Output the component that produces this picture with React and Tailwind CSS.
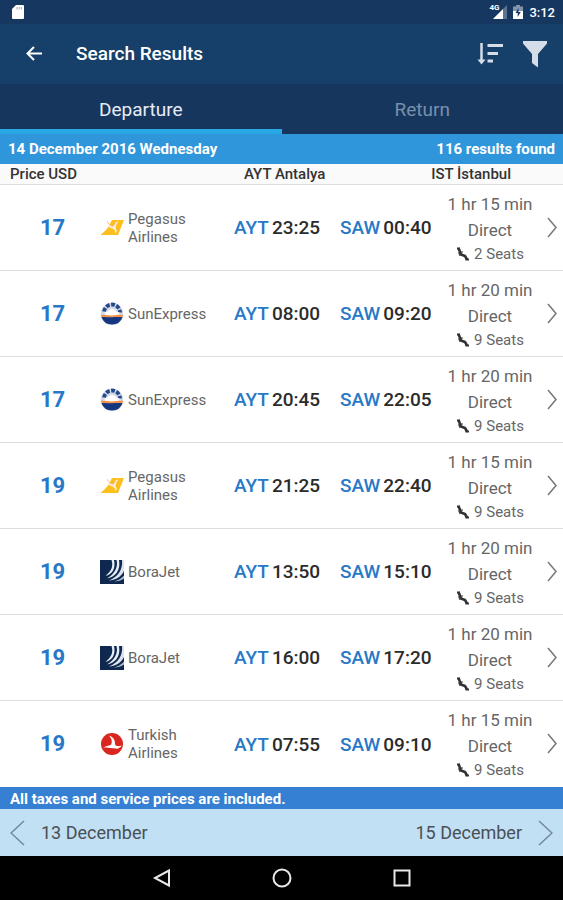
import React, { useState } from "react";

const flights = [
  { price: 17, airline: "Pegasus Airlines", depart: "23:25", arrive: "00:40", duration: "1 hr 15 min", seats: 2 },
  { price: 17, airline: "SunExpress", depart: "08:00", arrive: "09:20", duration: "1 hr 20 min", seats: 9 },
  { price: 17, airline: "SunExpress", depart: "20:45", arrive: "22:05", duration: "1 hr 20 min", seats: 9 },
  { price: 19, airline: "Pegasus Airlines", depart: "21:25", arrive: "22:40", duration: "1 hr 15 min", seats: 9 },
  { price: 19, airline: "BoraJet", depart: "13:50", arrive: "15:10", duration: "1 hr 20 min", seats: 9 },
  { price: 19, airline: "BoraJet", depart: "16:00", arrive: "17:20", duration: "1 hr 20 min", seats: 9 },
  { price: 19, airline: "Turkish Airlines", depart: "07:55", arrive: "09:10", duration: "1 hr 15 min", seats: 9 },
];

const AirlineLogo = ({ airline }) => {
  switch (airline) {
    case "Pegasus Airlines":
      return (
        <svg viewBox="0 0 24 24" className="w-6 h-6 shrink-0">
          <path d="M12 4H24L18 19H0.5C3 16.500 6 14.500 8 11.500Z" fill="#fcbf1b" />
          <path d="M7.500 4.500C8.500 8 10 9.500 13 10.200L15.500 6.500 18.500 5 16 9.500 15.500 12.500 17 14.500 15.800 17 14.800 16.500 15.200 14.800 12.500 12.500C10 12 8.500 10.800 7.500 9.200L9 9.300C7.800 8 7 6.500 7.500 4.500Z" fill="#fdeedd" />
          <path d="M7.500 5.500c1 2.800 2.700 4 5.500 4.700L15.500 7" stroke="#eba58a" strokeWidth="0.7" fill="none" />
        </svg>
      );
    case "SunExpress":
      return (
        <svg viewBox="0 0 24 24" className="w-6 h-6 shrink-0">
          <circle cx="12" cy="12" r="11.200" fill="#d3dae6" />
          <path d="M4 10.500A8 8 0 0 1 20 10.500" stroke="#24488c" strokeWidth="3.800" strokeDasharray="3.800 1.500" strokeDashoffset="-1" fill="none" />
          <path d="M4.500 10.500 7.500 9.500 9 7.800 12 7 15 7.800 16.500 9.500 19.500 10.500 19 14H5Z" fill="#fff" />
          <path d="M1 12.800c4-.3 7 .8 11 .6s7-.9 11-.6l-.8 3.700H1.800Z" fill="#f3904a" />
          <path d="M1.500 15.200c4-.6 7 .3 10.500.1s7-.6 10.500-.1A11.200 11.200 0 0 1 1.500 15.200Z" fill="#15377f" />
        </svg>
      );
    case "BoraJet":
      return (
        <svg viewBox="0 0 24 24" className="w-6 h-6 shrink-0">
          <path d="M0 0H24V24H0Z" fill="#0f2850" />
          <path d="M11.500 0C13.500 6 11.500 11 5.500 16 12 14.500 16 8.500 14 0Z" fill="#e8eef5" />
          <path d="M16.500 0C18.500 7.500 14 14.500 7 18.500 15 17.500 21 10 19 0Z" fill="#e8eef5" />
          <path d="M22 0C23 10 18 16.500 9 20.500 15 20.500 21 17 24 11V0Z" fill="#dbe4ee" />
          <path d="M14 21.500C18 20.500 21.500 18.500 24 15.500V18.500C21.500 20.500 18 21.500 14 21.500Z" fill="#aebccd" />
        </svg>
      );
    default:
      return (
        <svg viewBox="0 0 24 24" className="w-6 h-6 shrink-0">
          <circle cx="12" cy="12" r="11" fill="#d9261f" />
          <path d="M9 3.500c4 1.200 6 4 6 8 0 1.500.8 2.300 2 2.500 1.800.3 3.500.1 5-.7-1.500 2.600-3.500 3.500-6.500 3.300-4-.2-8-1.600-12.500-.8 2.500-1.800 5.500-2 8-3 1.500-2.800 1-6-2-9.300Z" fill="#fff" />
        </svg>
      );
  }
};

const SeatIcon = () => (
  <svg viewBox="0 0 14 14" className="w-3.5 h-3.5" fill="none" stroke="#333">
    <path d="M2.500 1 5 7.500 9 9 11 12.500" strokeWidth="2.600" strokeLinejoin="round" />
    <path d="M1 1.500H4M9.500 12.500H13" strokeWidth="2" />
    <path d="M4.500 5H7M2.500 5.500 4 9" strokeWidth="1" />
  </svg>
);

const Chevron = ({ className, points = "1,1 9,10.500 1,20", viewBox = "0 0 10 21" }) => (
  <svg viewBox={viewBox} className={className} fill="none" stroke="currentColor" strokeWidth="1.500">
    <polyline points={points} />
  </svg>
);

const StatusBar = () => (
  <div className="h-6 shrink-0 bg-[#16375f] flex items-center justify-between pl-3 pr-2 text-white">
    <svg viewBox="0 0 12 14" className="w-3 h-3.5">
      <path d="M4 0H11a1 1 0 0 1 1 1V13a1 1 0 0 1-1 1H1a1 1 0 0 1-1-1V4Z" fill="#fff" />
      <path d="M5 2V4.500M7.200 2V4.500M9.400 2V4.500" stroke="#9aabc0" strokeWidth="1" />
    </svg>
    <div className="flex items-center gap-1.5">
      <div className="relative w-4 h-3.5">
        <svg viewBox="0 0 16 14" className="w-4 h-3.5">
          <path d="M16 0V14H2Z" fill="#5c7491" />
          <path d="M12 4V14H2Z" fill="#fff" />
        </svg>
        <span className="absolute -left-0.5 -top-px text-[8px] leading-none font-bold">4G</span>
      </div>
      <svg viewBox="0 0 10 14" className="w-2.5 h-3.5">
        <path d="M3 0H7V1.500H10V7H0V1.500H3Z" fill="#8496ad" />
        <path d="M0 6H10V14H0Z" fill="#fff" />
        <path d="M5.500 3 2.500 8H4.700V12L7.700 7H5.500Z" fill="#16375f" />
      </svg>
      <span className="text-[13px] leading-none font-medium">3:12</span>
    </div>
  </div>
);

const Toolbar = () => (
  <header className="h-[60px] shrink-0 bg-[#164069] flex items-center pl-6 pr-4 text-white">
    <button type="button" aria-label="Back">
      <svg viewBox="0 0 20 20" className="w-5 h-5" fill="none" stroke="currentColor" strokeWidth="2">
        <path d="M18 9.500H4M10 3 3.500 9.500 10 16" />
      </svg>
    </button>
    <h1 className="ml-8 text-[19px] leading-6 font-medium">Search Results</h1>
    <div className="ml-auto flex items-center gap-5 text-[#d5dde8]">
      <button type="button" aria-label="Sort">
        <svg viewBox="0 0 26 24" className="w-[26px] h-6" fill="none" stroke="currentColor">
          <path d="M4.500 1V20" strokeWidth="2.500" />
          <path d="M0.500 17.500H8.500L4.500 22.500Z" fill="currentColor" stroke="none" />
          <path d="M10.500 3.500H26M10.500 11.500H21M10.500 19H16" strokeWidth="3" />
        </svg>
      </button>
      <button type="button" aria-label="Filter">
        <svg viewBox="0 0 24 27" className="w-6 h-[27px]" fill="currentColor">
          <path d="M0 0H24V2.500L15 13V26.500L9 22V13L0 2.500Z" />
        </svg>
      </button>
    </div>
  </header>
);

const Tabs = ({ active, onChange }) => (
  <div role="tablist" className="h-[50px] shrink-0 grid grid-cols-2 bg-[#16365e] text-[19px]">
    {["Departure", "Return"].map((tab) => (
      <button
        key={tab}
        type="button"
        role="tab"
        aria-selected={active === tab}
        onClick={() => onChange(tab)}
        className={
          active === tab
            ? "pt-2 border-b-[5px] border-[#28a9e5] text-[#e6ecf5]"
            : "pt-2 border-b-[5px] border-transparent text-[#7890aa]"
        }
      >
        {tab}
      </button>
    ))}
  </div>
);

const FlightTable = () => (
  <table className="w-full table-fixed bg-white">
    <colgroup>
      <col className="w-[100px]" />
      <col />
      <col className="w-[106px]" />
      <col className="w-[100px]" />
      <col className="w-[100px]" />
      <col className="w-[23px]" />
    </colgroup>
    <thead className="bg-[#fafafa] text-[15px] leading-5 text-[#333]">
      <tr className="h-5 text-left">
        <th colSpan={2} className="p-0 pl-2.5 font-medium">Price USD</th>
        <th className="p-0 pl-2.5 font-medium whitespace-nowrap">AYT Antalya</th>
        <th colSpan={3} className="p-0 pr-13 font-medium text-right">IST İstanbul</th>
      </tr>
    </thead>
    <tbody>
      {flights.map((flight, index) => (
        <tr key={index} className="h-[86px] border-t border-[#dedede]">
          <td className="p-0 pl-10 text-[22px] font-bold text-[#2878c8]">{flight.price}</td>
          <td className="p-0">
            <div className="flex items-center gap-1 pr-5 text-[15px] leading-[18px] text-[#666]">
              <AirlineLogo airline={flight.airline} />
              <span>{flight.airline}</span>
            </div>
          </td>
          <td className="p-0">
            <div className="flex gap-[3px] pt-0.5 text-[19px] font-medium text-[#2b2b2b]">
              <span className="text-[#2878c8]">AYT</span>
              <span>{flight.depart}</span>
            </div>
          </td>
          <td className="p-0">
            <div className="flex gap-[3px] pt-0.5 text-[19px] font-medium text-[#2b2b2b]">
              <span className="text-[#2878c8]">SAW</span>
              <span>{flight.arrive}</span>
            </div>
          </td>
          <td className="p-0 text-center text-[17px] leading-[26px] text-[#666]">
            <div>{flight.duration}</div>
            <div>Direct</div>
            <div className="flex items-center justify-center gap-1 text-[15px] leading-[22px]">
              <SeatIcon />
              {flight.seats} Seats
            </div>
          </td>
          <td className="p-0">
            <button type="button" aria-label="Flight details" className="block ml-[7px] text-[#777]">
              <Chevron className="w-2.5 h-[21px]" />
            </button>
          </td>
        </tr>
      ))}
    </tbody>
  </table>
);

const DayNav = () => (
  <nav className="h-[47px] shrink-0 flex items-center justify-between px-2.5 bg-[#c1e0f4] text-lg text-[#4a4f55]">
    <button type="button" className="flex items-center gap-4">
      <Chevron className="w-[15px] h-[26px] text-[#74879a]" viewBox="0 0 15 26" points="14,1 1,13 14,25" />
      13 December
    </button>
    <button type="button" className="flex items-center gap-4">
      15 December
      <Chevron className="w-[15px] h-[26px] text-[#74879a]" viewBox="0 0 15 26" points="1,1 14,13 1,25" />
    </button>
  </nav>
);

const SystemNav = () => (
  <div className="h-11 shrink-0 flex items-center justify-center gap-[100px] bg-black text-[#e8e8e8]">
    <button type="button" aria-label="System back">
      <svg viewBox="0 0 20 20" className="w-5 h-5" fill="none" stroke="currentColor" strokeWidth="2">
        <path d="M17 2.500V17.500L3 10Z" />
      </svg>
    </button>
    <button type="button" aria-label="Home">
      <svg viewBox="0 0 20 20" className="w-5 h-5" fill="none" stroke="currentColor" strokeWidth="2">
        <circle cx="10" cy="10" r="8.500" />
      </svg>
    </button>
    <button type="button" aria-label="Recent apps">
      <svg viewBox="0 0 20 20" className="w-5 h-5" fill="none" stroke="currentColor" strokeWidth="2">
        <rect x="2.500" y="2.500" width="15" height="15" />
      </svg>
    </button>
  </div>
);

const App = () => {
  const [activeTab, setActiveTab] = useState("Departure");

  return (
    <div className="min-h-screen flex flex-col bg-white font-['Roboto',sans-serif]">
      <StatusBar />
      <Toolbar />
      <Tabs active={activeTab} onChange={setActiveTab} />

      {/* Selected day */}
      <div className="h-[30px] shrink-0 flex items-center justify-between px-2 bg-[#3096db] text-[15px] font-bold text-white">
        <span>14 December 2016 Wednesday</span>
        <span>116 results found</span>
      </div>

      <main className="grow">
        <FlightTable />
      </main>

      <p className="h-[22px] shrink-0 pl-2.5 bg-[#3680d3] text-[15px] leading-6 font-bold text-white">
        All taxes and service prices are included.
      </p>
      <DayNav />
      <SystemNav />
    </div>
  );
};

export default App;
